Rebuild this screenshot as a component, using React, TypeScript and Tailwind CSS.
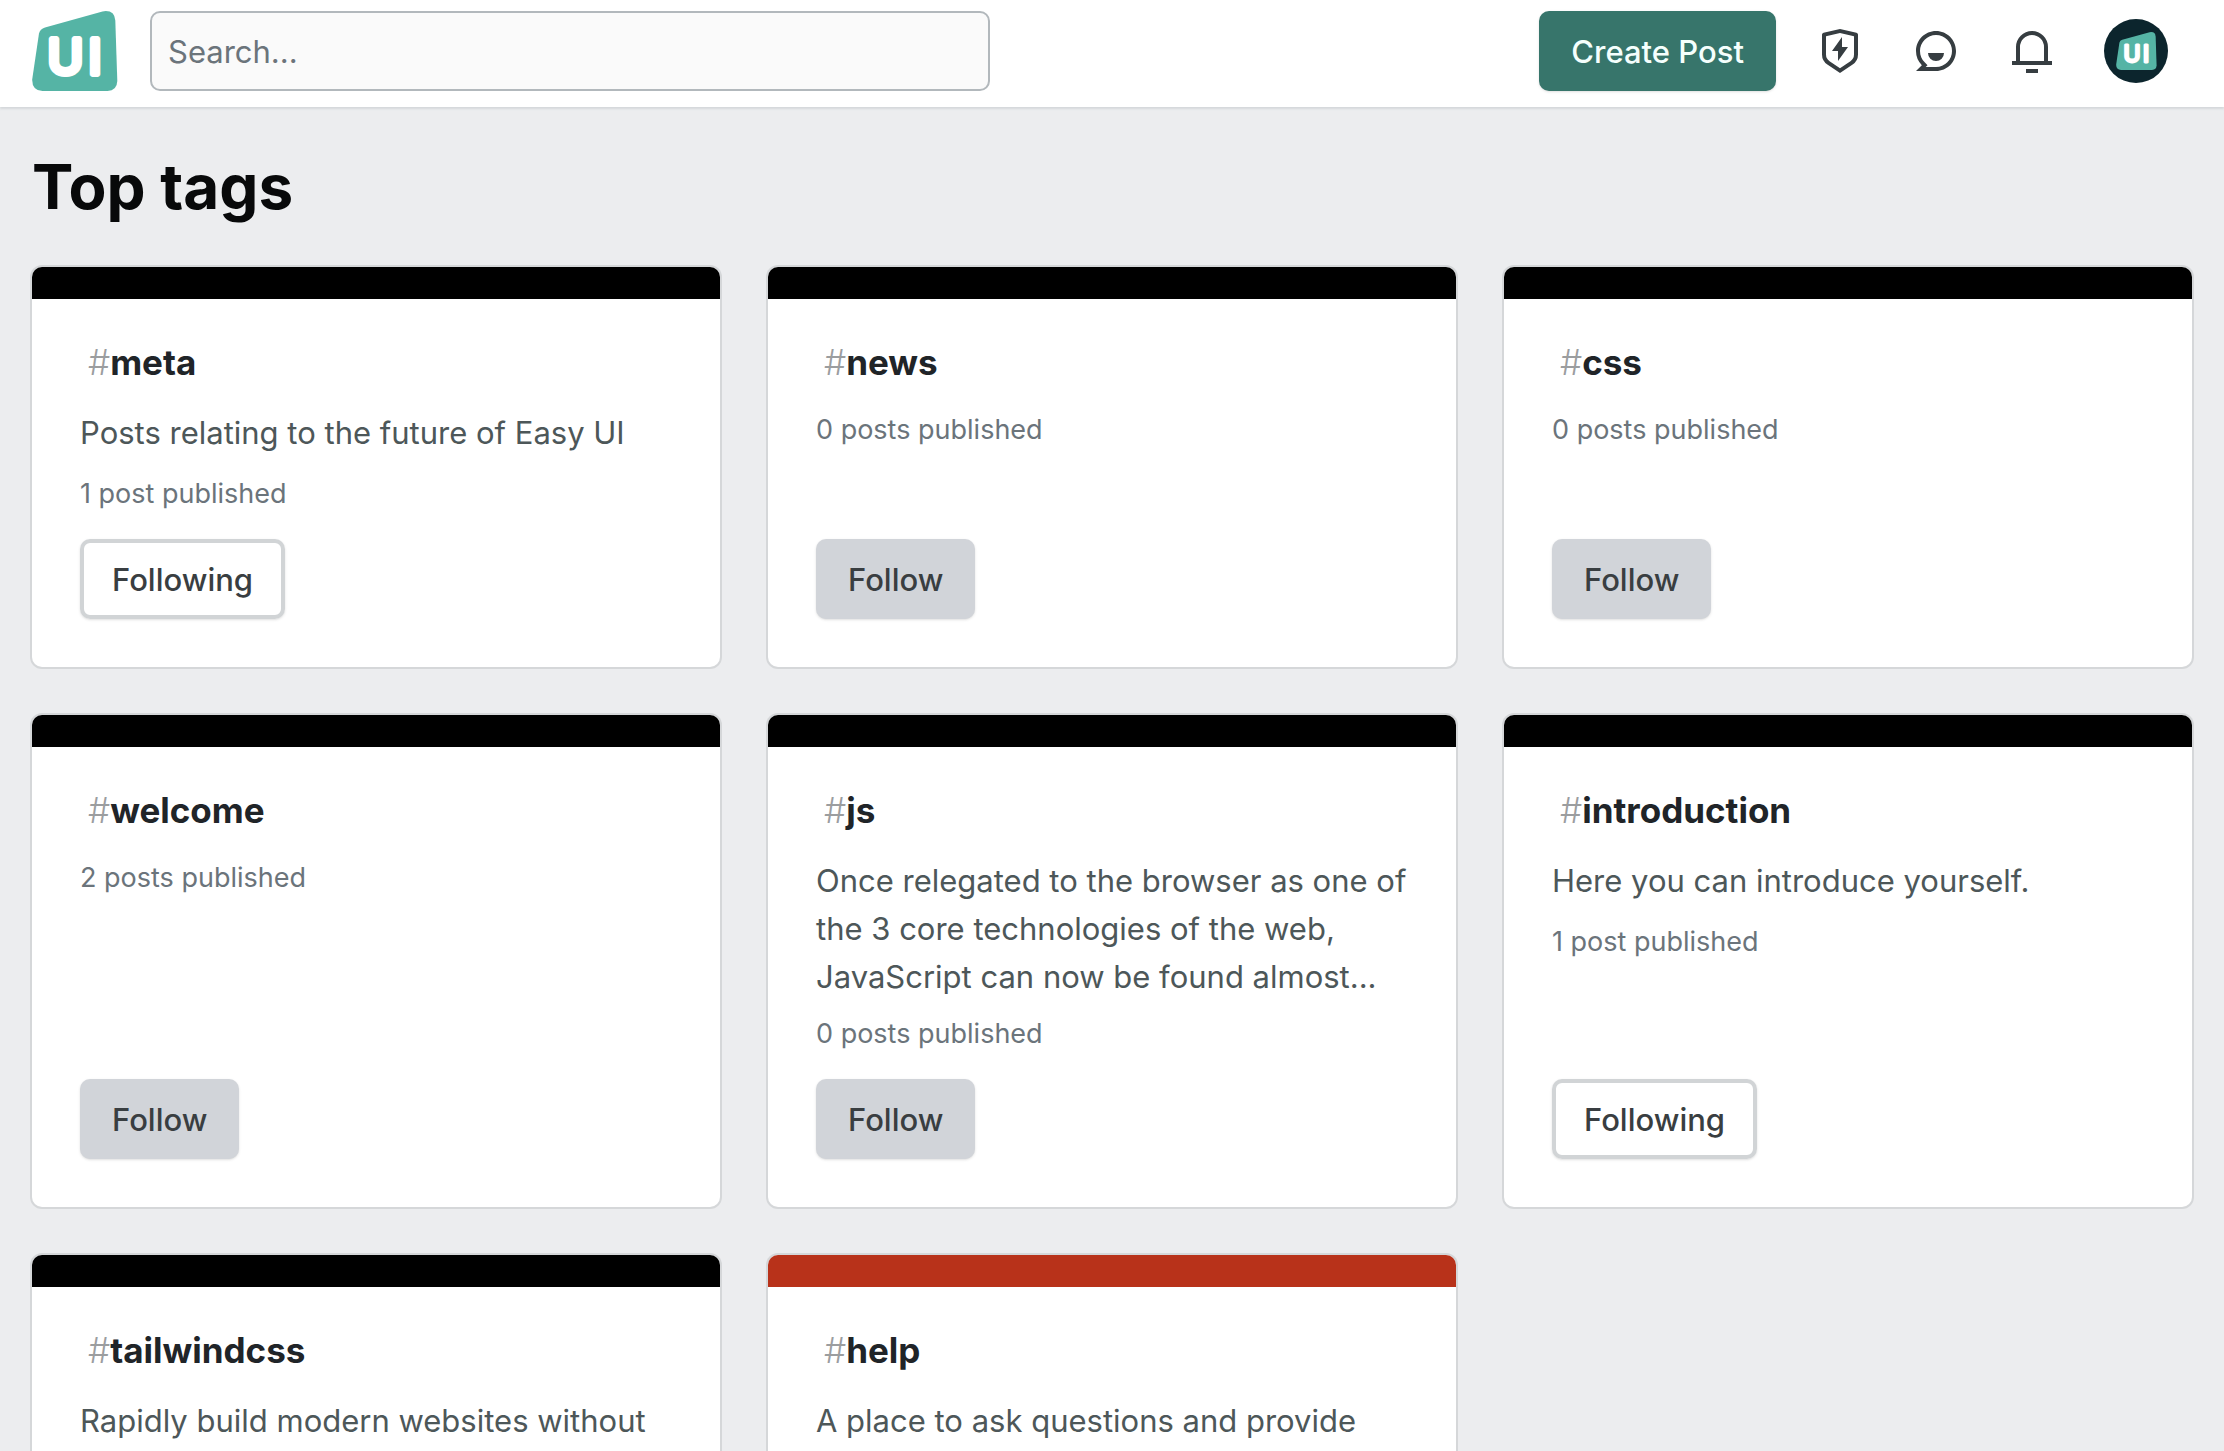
import { useState } from "react";

type Tag = {
  name: string;
  description?: string;
  posts: number;
  following: boolean;
  accent: string;
};

const TAGS: Tag[] = [
  {
    name: "meta",
    description: "Posts relating to the future of Easy UI",
    posts: 1,
    following: true,
    accent: "bg-black",
  },
  { name: "news", posts: 0, following: false, accent: "bg-black" },
  { name: "css", posts: 0, following: false, accent: "bg-black" },
  { name: "welcome", posts: 2, following: false, accent: "bg-black" },
  {
    name: "js",
    description:
      "Once relegated to the browser as one of the 3 core technologies of the web, JavaScript can now be found almost...",
    posts: 0,
    following: false,
    accent: "bg-black",
  },
  {
    name: "introduction",
    description: "Here you can introduce yourself.",
    posts: 1,
    following: true,
    accent: "bg-black",
  },
  {
    name: "tailwindcss",
    description: "Rapidly build modern websites without ever leaving your HTML.",
    posts: 0,
    following: false,
    accent: "bg-black",
  },
  {
    name: "help",
    description: "A place to ask questions and provide answers.",
    posts: 0,
    following: false,
    accent: "bg-[#b8321a]",
  },
];

function Logo({ className }: { className: string }) {
  return (
    <svg viewBox="0 0 86 80" className={className} aria-hidden="true">
      <path
        d="M13 16.5 L70.5 0.4 Q82.5 -1.500 83.300 9.500 L85.300 70 Q85 79.500 75.500 80 L10.500 80 Q0 79.500 0.200 68.500 L7 22.500 Q8 18 13 16.500 Z"
        fill="#55b4a5"
      />
      <text
        x="15.500 56.500"
        y="63"
        fontSize="48"
        fontWeight="400"
        fill="#fff"
        stroke="#fff"
        strokeWidth="6"
        strokeLinejoin="round"
      >
        UI
      </text>
    </svg>
  );
}

function IconButton({ label, path }: { label: string; path: string }) {
  return (
    <button
      type="button"
      aria-label={label}
      className="flex size-20 items-center justify-center rounded-lg text-[#363d41] hover:bg-gray-100"
    >
      <svg viewBox="0 0 24 24" className="size-12" fill="currentColor">
        <path d={path} />
      </svg>
    </button>
  );
}

function Header() {
  return (
    <header className="flex items-center justify-between bg-white pt-[11px] pr-12 pb-4 pl-8 shadow-[0_2px_2px_#d5d8db]">
      <div className="flex flex-1 items-center gap-8">
        <a href="#" aria-label="Easy UI home">
          <Logo className="h-20 w-[86px]" />
        </a>
        <input
          type="text"
          placeholder="Search..."
          aria-label="Search"
          className="h-20 w-full max-w-[840px] rounded-[10px] border-2 border-[#b2b8bc] bg-[#fafafa] px-4 text-[31px] placeholder:text-[#6b747b]"
        />
      </div>
      <nav className="flex items-center gap-4">
        <a
          href="#"
          className="mr-2 flex h-20 items-center rounded-[10px] bg-[#37756b] px-8 pt-[2px] text-[31px] font-medium text-[#f5fffd] shadow-sm"
        >
          Create Post
        </a>
        <IconButton
          label="Moderation"
          path="M3.783 2.826L12 1l8.217 1.826a1 1 0 01.783.976v9.987a6 6 0 01-2.672 4.992L12 23l-6.328-4.219A6 6 0 013 13.79V3.802a1 1 0 01.783-.976zM5 4.604v9.185a4 4 0 001.781 3.328L12 20.597l5.219-3.48A4 4 0 0019 13.79V4.604L12 3.05 5 4.604zM13 10h3l-5 7v-5H8l5-7v5z"
        />
        <IconButton
          label="Messages"
          path="M2 12C2 6.477 6.477 2 12 2s10 4.477 10 10-4.477 10-10 10H2l2.929-2.929A9.969 9.969 0 012 12zm4.828 8H12a8 8 0 10-8-8c0 2.152.851 4.165 2.343 5.657l1.414 1.414-.929.929zM8 13h8a4 4 0 11-8 0z"
        />
        <IconButton
          label="Notifications"
          path="M20 17h2v2H2v-2h2v-7a8 8 0 1116 0v7zm-2 0v-7a6 6 0 10-12 0v7h12zm-9 4h6v2H9v-2z"
        />
        <button
          type="button"
          aria-label="Account"
          className="mr-2 ml-4 flex size-16 items-center justify-center rounded-full bg-[#0c252d]"
        >
          <Logo className="h-[38px] w-[41px]" />
        </button>
      </nav>
    </header>
  );
}

function TagCard({ tag }: { tag: Tag }) {
  const [following, setFollowing] = useState(tag.following);

  return (
    <article className="flex flex-col overflow-hidden rounded-[10px] bg-white shadow-[0_0_0_2px_#d5d7d9]">
      <div className={`h-8 ${tag.accent}`} />
      <div className="flex flex-1 flex-col items-start px-12 pt-10 pb-12">
        <h2 className="mb-6 px-2 text-[35px] leading-[46px] font-bold text-[#202428]">
          <a href="#">
            <span className="font-light text-[#9b9d9f]">#</span>
            {tag.name}
          </a>
        </h2>
        {tag.description && (
          <p className="mb-4 max-h-[140px] text-[31px] leading-[48px] text-[#4d5759]">
            {tag.description}
          </p>
        )}
        <p className="mb-6 text-[27px] leading-[42px] text-[#6b747b]">
          {tag.posts} {tag.posts === 1 ? "post" : "posts"} published
        </p>
        <button
          type="button"
          onClick={() => setFollowing(!following)}
          className={`mt-auto h-20 rounded-[10px] px-8 pt-[2px] text-[31px] font-medium text-[#393e41] shadow-sm ${
            following
              ? "bg-white inset-ring-4 inset-ring-[#d1d4d6]"
              : "bg-[#d1d4d9]"
          }`}
        >
          {following ? "Following" : "Follow"}
        </button>
      </div>
    </article>
  );
}

export default function App() {
  return (
    <div className="min-h-screen bg-[#ecedef] font-['Inter',sans-serif] text-[#08090a]">
      <Header />
      <main className="px-8 pb-12">
        <h1 className="py-10 text-[62px] leading-[80px] font-bold">Top tags</h1>
        <div className="grid grid-cols-3 gap-12">
          {TAGS.map((tag) => (
            <TagCard key={tag.name} tag={tag} />
          ))}
        </div>
      </main>
    </div>
  );
}
